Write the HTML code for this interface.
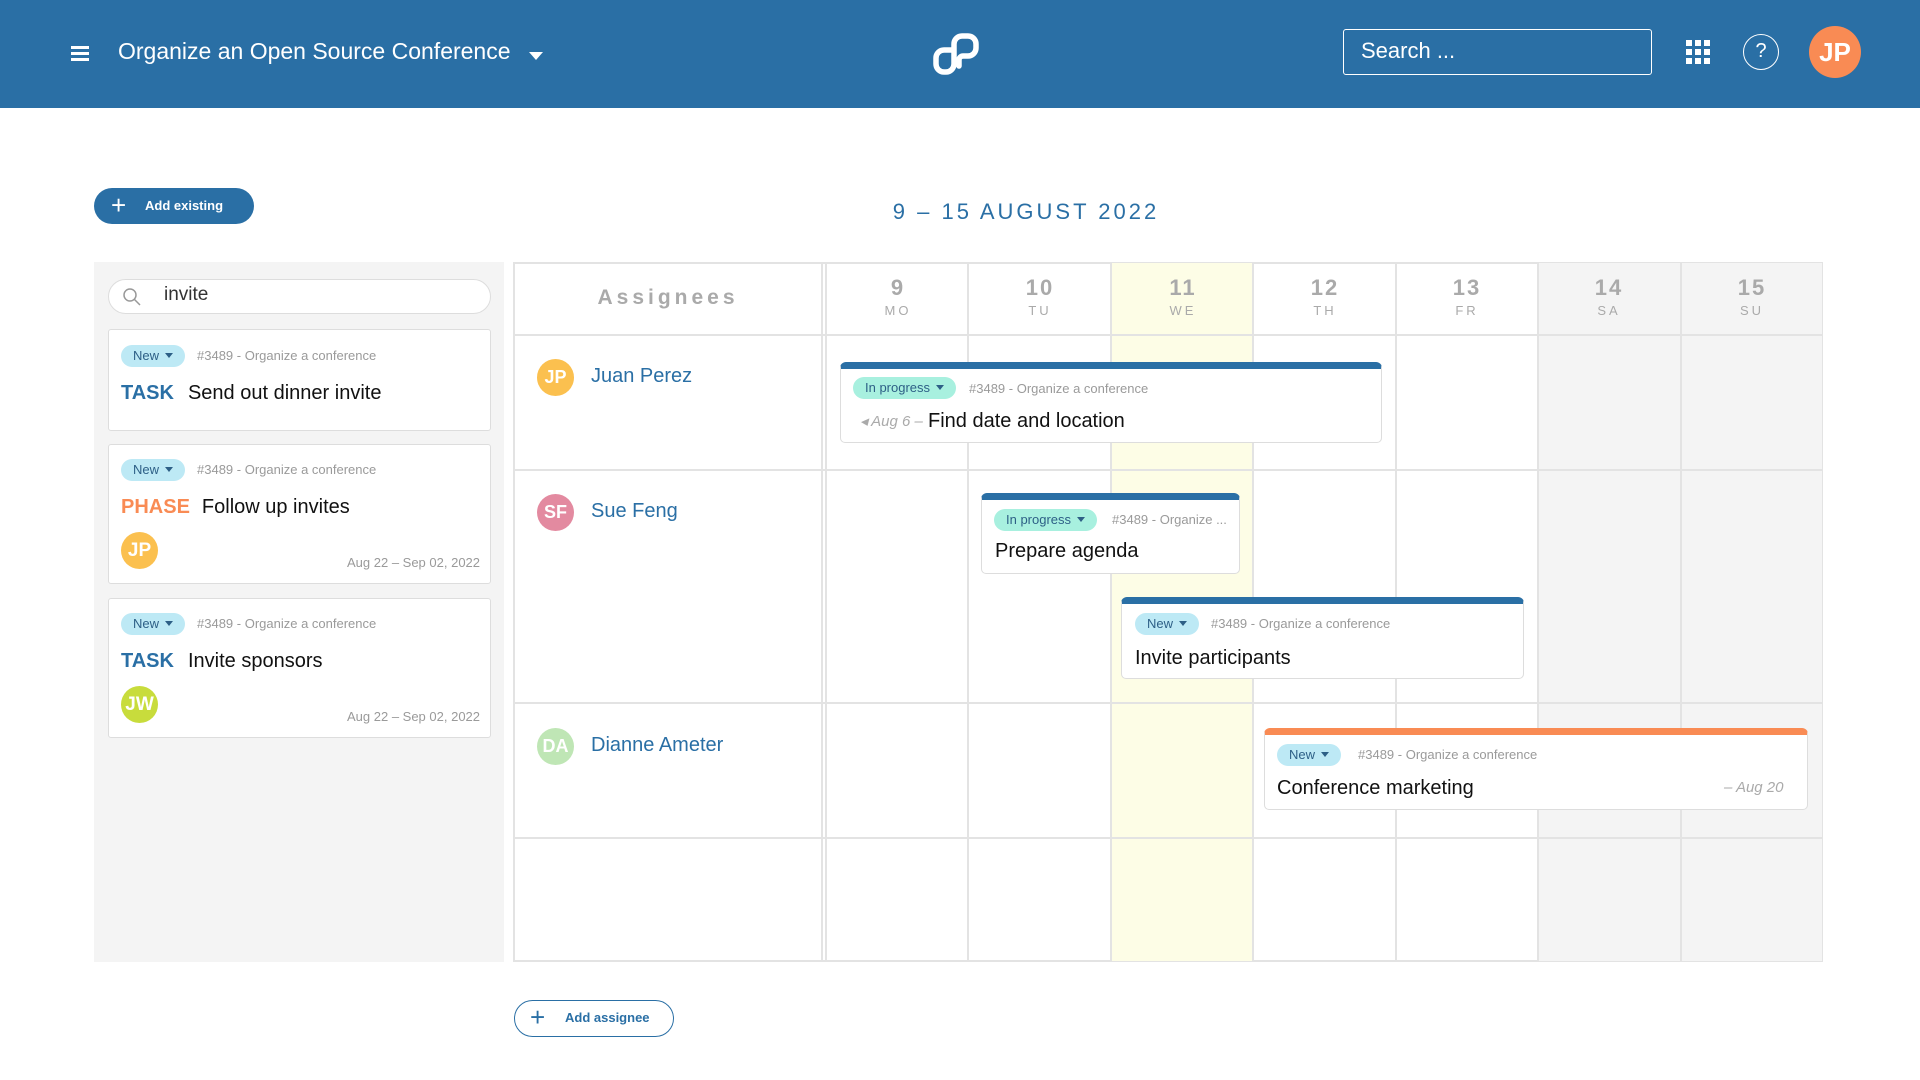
<!DOCTYPE html>
<html><head><meta charset="utf-8"><style>
*{box-sizing:border-box;margin:0;padding:0}
body{width:1920px;height:1080px;position:relative;background:#fff;font-family:"Liberation Sans",sans-serif;overflow:hidden}
.a{position:absolute}
.hdr{left:0;top:0;width:1920px;height:108px;background:#2a6fa5}
.badge{position:absolute;height:22px;border-radius:11px;font-size:13px;line-height:22px;padding:0 12px;color:#2d5f86}
.new{background:#bde9f5}
.prog{background:#a8f0df}
.meta{position:absolute;font-size:13px;color:#9a9a9a;white-space:nowrap}
.card{position:absolute;background:#fff;border:1px solid #ddd;border-radius:3px}
.ttl{position:absolute;font-size:20px;color:#111;white-space:nowrap}
.av{position:absolute;border-radius:50%;color:#fff;font-weight:bold;text-align:center}
.ev{position:absolute;background:#fff;border:1px solid #ddd;border-top:7px solid #2a6fa5;border-radius:6px 6px 5px 5px}
.vl{position:absolute;top:262px;height:700px;width:2px;background:#e3e3e3}
.hl{position:absolute;left:513px;width:1310px;height:2px;background:#e3e3e3}
.day{position:absolute;top:275px;width:142px;text-align:center;color:#aaa}
.day b{display:block;font-size:22px;letter-spacing:2px}
.day span{display:block;font-size:13px;letter-spacing:3px;margin-top:2px}
.nm{position:absolute;left:591px;font-size:20px;color:#2a6fa5}
.caret{display:inline-block;width:0;height:0;border-left:4px solid transparent;border-right:4px solid transparent;border-top:5px solid #2d5f86;margin-left:6px;vertical-align:2px}
</style></head><body>
<div class="a hdr"></div>
<div class="a" style="left:71px;top:46px;width:18px;height:3px;background:#fff;box-shadow:0 6px 0 #fff,0 12px 0 #fff"></div>
<div class="a" style="left:118px;top:38px;font-size:23px;color:#fff;white-space:nowrap">Organize an Open Source Conference</div>
<div class="a" style="left:529px;top:52px;border-left:7px solid transparent;border-right:7px solid transparent;border-top:8px solid #fff"></div>
<svg class="a" style="left:925px;top:25px" width="60" height="55" viewBox="925 25 60 55">
<path d="M953 50 H944 a8 8 0 0 0 -8 8 v6 a8 8 0 0 0 8 8 h2 a8 8 0 0 0 8 -8 V44 a8 8 0 0 1 8 -8 h6 a8 8 0 0 1 8 8 v4 a8 8 0 0 1 -8 8 h-5 a4 4 0 0 0 -4 4 v6" fill="none" stroke="#fff" stroke-width="5.5" stroke-linecap="round" stroke-linejoin="round"/>
</svg>
<div class="a" style="left:1343px;top:29px;width:309px;height:46px;border:1.5px solid #fff;border-radius:3px;color:#fff;font-size:22px;line-height:42px;padding-left:17px">Search ...</div>
<svg class="a" style="left:1686px;top:40px" width="24" height="24"><g fill="#fff"><rect x="0" y="0" width="6" height="6"/><rect x="9" y="0" width="6" height="6"/><rect x="18" y="0" width="6" height="6"/><rect x="0" y="9" width="6" height="6"/><rect x="9" y="9" width="6" height="6"/><rect x="18" y="9" width="6" height="6"/><rect x="0" y="18" width="6" height="6"/><rect x="9" y="18" width="6" height="6"/><rect x="18" y="18" width="6" height="6"/></g></svg>
<div class="a" style="left:1743px;top:34px;width:36px;height:36px;border:1.5px solid #fff;border-radius:50%;color:#fff;font-size:20px;text-align:center;line-height:33px">?</div>
<div class="av" style="left:1809px;top:26px;width:52px;height:52px;background:#f98b54;font-size:26px;line-height:52px">JP</div>

<div class="a" style="left:94px;top:188px;width:160px;height:36px;border-radius:18px;background:#2a6fa5;color:#fff;font-size:13px;font-weight:bold;line-height:36px"><span style="position:absolute;left:17px;top:-1px;font-size:26px;font-weight:normal">+</span><span style="position:absolute;left:51px">Add existing</span></div>
<div class="a" style="left:826px;top:199px;width:400px;text-align:center;font-size:22px;letter-spacing:3px;color:#2a6fa5;white-space:nowrap">9 – 15 AUGUST 2022</div>

<div class="a" style="left:94px;top:262px;width:410px;height:700px;background:#f4f4f4"></div>
<div class="a" style="left:108px;top:279px;width:383px;height:35px;border:1px solid #ddd;border-radius:18px;background:#fff"></div>
<svg class="a" style="left:122px;top:287px" width="20" height="20"><circle cx="8" cy="8" r="6" fill="none" stroke="#999" stroke-width="1.5"/><path d="M12.5 12.5 L18 18" stroke="#999" stroke-width="1.5"/></svg>
<div class="a" style="left:164px;top:284px;font-size:19px;color:#333">invite</div>

<div class="card" style="left:108px;top:329px;width:383px;height:102px"></div>
<div class="badge new" style="left:121px;top:345px">New<span class="caret"></span></div>
<div class="meta" style="left:197px;top:348px">#3489 - Organize a conference</div>
<div class="ttl" style="left:121px;top:382px"><b style="color:#2a6fa5;margin-right:14px">TASK</b>Send out dinner invite</div>

<div class="card" style="left:108px;top:444px;width:383px;height:140px"></div>
<div class="badge new" style="left:121px;top:459px">New<span class="caret"></span></div>
<div class="meta" style="left:197px;top:462px">#3489 - Organize a conference</div>
<div class="ttl" style="left:121px;top:496px"><b style="color:#f98b54;margin-right:12px">PHASE</b>Follow up invites</div>
<div class="av" style="left:121px;top:532px;width:37px;height:37px;background:#fbc04f;font-size:19px;line-height:37px">JP</div>
<div class="meta" style="left:347px;top:555px">Aug 22 – Sep 02, 2022</div>

<div class="card" style="left:108px;top:598px;width:383px;height:140px"></div>
<div class="badge new" style="left:121px;top:613px">New<span class="caret"></span></div>
<div class="meta" style="left:197px;top:616px">#3489 - Organize a conference</div>
<div class="ttl" style="left:121px;top:650px"><b style="color:#2a6fa5;margin-right:14px">TASK</b>Invite sponsors</div>
<div class="av" style="left:121px;top:686px;width:37px;height:37px;background:#c8dc3c;font-size:19px;line-height:37px">JW</div>
<div class="meta" style="left:347px;top:709px">Aug 22 – Sep 02, 2022</div>

<div class="a" style="left:513px;top:262px;width:1310px;height:700px;border:2px solid #e3e3e3;background:#fff"></div>
<div class="a" style="left:1111px;top:263px;width:142px;height:698px;background:#fdfde6"></div>
<div class="a" style="left:1538px;top:263px;width:284px;height:698px;background:#f4f4f4"></div>
<div class="vl" style="left:821px"></div><div class="vl" style="left:825px"></div>
<div class="vl" style="left:967px"></div><div class="vl" style="left:1110px"></div><div class="vl" style="left:1252px"></div><div class="vl" style="left:1395px"></div><div class="vl" style="left:1537px"></div><div class="vl" style="left:1680px"></div>
<div class="hl" style="top:334px"></div><div class="hl" style="top:469px"></div><div class="hl" style="top:702px"></div><div class="hl" style="top:837px"></div>
<div class="a" style="left:513px;top:286px;width:310px;text-align:center;font-size:21px;letter-spacing:4px;color:#aaa;font-weight:bold">Assignees</div>
<div class="day" style="left:827px"><b>9</b><span>MO</span></div>
<div class="day" style="left:969px"><b>10</b><span>TU</span></div>
<div class="day" style="left:1112px"><b>11</b><span>WE</span></div>
<div class="day" style="left:1254px"><b>12</b><span>TH</span></div>
<div class="day" style="left:1396px"><b>13</b><span>FR</span></div>
<div class="day" style="left:1538px"><b>14</b><span>SA</span></div>
<div class="day" style="left:1681px"><b>15</b><span>SU</span></div>

<div class="av" style="left:537px;top:359px;width:37px;height:37px;background:#fbc04f;font-size:18px;line-height:37px">JP</div>
<div class="nm" style="left:591px;top:365px">Juan Perez</div>
<div class="av" style="left:537px;top:494px;width:37px;height:37px;background:#e38aa0;font-size:18px;line-height:37px">SF</div>
<div class="nm" style="top:500px">Sue Feng</div>
<div class="av" style="left:537px;top:728px;width:37px;height:37px;background:#bfe6b5;font-size:18px;line-height:37px">DA</div>
<div class="nm" style="top:734px">Dianne Ameter</div>

<div class="ev" style="left:840px;top:362px;width:542px;height:81px"></div>
<div class="badge prog" style="left:853px;top:377px">In progress<span class="caret"></span></div>
<div class="meta" style="left:969px;top:381px">#3489 - Organize a conference</div>
<div class="meta" style="left:860px;top:412px;font-style:italic;font-size:15px;color:#aaa">◂ Aug 6 –</div>
<div class="ttl" style="left:928px;top:410px">Find date and location</div>

<div class="ev" style="left:981px;top:493px;width:259px;height:81px"></div>
<div class="badge prog" style="left:994px;top:509px">In progress<span class="caret"></span></div>
<div class="meta" style="left:1112px;top:512px">#3489 - Organize ...</div>
<div class="ttl" style="left:995px;top:540px">Prepare agenda</div>

<div class="ev" style="left:1121px;top:597px;width:403px;height:82px"></div>
<div class="badge new" style="left:1135px;top:613px">New<span class="caret"></span></div>
<div class="meta" style="left:1211px;top:616px">#3489 - Organize a conference</div>
<div class="ttl" style="left:1135px;top:647px">Invite participants</div>

<div class="ev" style="left:1264px;top:728px;width:544px;height:82px;border-top-color:#f98b54"></div>
<div class="badge new" style="left:1277px;top:744px">New<span class="caret"></span></div>
<div class="meta" style="left:1358px;top:747px">#3489 - Organize a conference</div>
<div class="ttl" style="left:1277px;top:777px">Conference marketing</div>
<div class="meta" style="left:1724px;top:779px;font-style:italic;font-size:15px;color:#aaa">– Aug 20</div>

<div class="a" style="left:514px;top:1000px;width:160px;height:37px;border:1.5px solid #2a6fa5;border-radius:19px;color:#2a6fa5;font-size:13px;font-weight:bold;line-height:34px"><span style="position:absolute;left:15px;top:-1px;font-size:26px;font-weight:normal">+</span><span style="position:absolute;left:50px">Add assignee</span></div>
</body></html>
